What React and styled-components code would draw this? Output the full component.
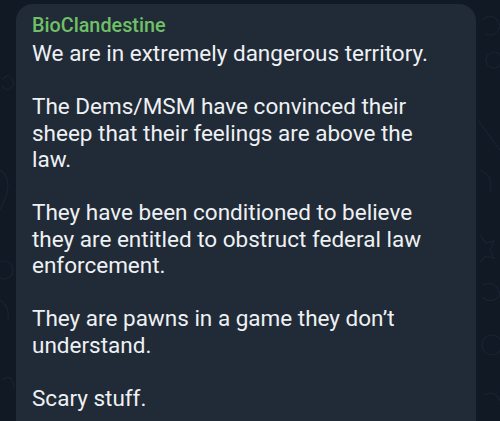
import React from "react";
import styled, { createGlobalStyle } from "styled-components";

const Global = createGlobalStyle`
  html, body { margin: 0; padding: 0; background: #101924; }
  body { width: 500px; height: 421px; overflow: hidden; font-family: Roboto, "Noto Sans", sans-serif; }
`;

const Screen = styled.div`
  position: relative;
  width: 500px;
  height: 421px;
  overflow: hidden;
  background: #101924;
`;

const Doodles = styled.svg`
  position: absolute;
  inset: 0;
  width: 500px;
  height: 421px;
`;

const Column = styled.div`
  position: relative;
  padding: 4px 24px 0 16px;
`;

const Bubble = styled.div`
  background: #212b37;
  border-radius: 17px 17px 0 0;
  padding: 10px 31px 40px 16px;
  min-height: 420px;
  box-sizing: border-box;
`;

const Author = styled.div`
  color: #6fc066;
  font-size: 19.8px;
  font-weight: 500;
  line-height: 24px;
`;

const Body = styled.div`
  color: #eef1f4;
  font-size: 22.5px;
  line-height: 26.5px;
  margin-top: 2px;
`;

const Para = styled.p`
  margin: 0 0 26.5px 0;
`;

export default function App() {
  const paras = [
    "We are in extremely dangerous territory.",
    "The Dems/MSM have convinced their sheep that their feelings are above the law.",
    "They have been conditioned to believe they are entitled to obstruct federal law enforcement.",
    "They are pawns in a game they don\u2019t understand.",
    "Scary stuff.",
  ];
  return (
    <Screen>
      <Global />
      <Doodles viewBox="0 0 500 421">
        <g fill="none" stroke="#1a2431" strokeWidth="1.2">
          <path d="M2 80 q8 -10 12 4 q-6 10 -12 2" />
          <path d="M0 170 q12 8 6 26 q-4 10 -6 14" />
          <circle cx="4" cy="270" r="9" />
          <path d="M0 300 q10 6 8 20" />
          <path d="M2 380 q10 -8 12 8" />
          <path d="M482 20 q12 -10 18 6 q-4 12 -14 8" />
          <circle cx="494" cy="60" r="8" />
          <path d="M478 120 q14 20 22 30" />
          <path d="M480 170 q14 6 10 22" />
          <path d="M480 235 l6 8 l8 -2 l-4 9 l4 8 l-8 -2 l-6 6" />
          <path d="M482 285 q14 -6 18 10 q-8 10 -18 2" />
          <circle cx="492" cy="345" r="10" />
          <path d="M484 395 q10 -6 16 6" />
        </g>
      </Doodles>
      <Column>
        <Bubble>
          <Author>BioClandestine</Author>
          <Body>
            {paras.map((p, i) => (
              <Para key={i}>{p}</Para>
            ))}
          </Body>
        </Bubble>
      </Column>
    </Screen>
  );
}
